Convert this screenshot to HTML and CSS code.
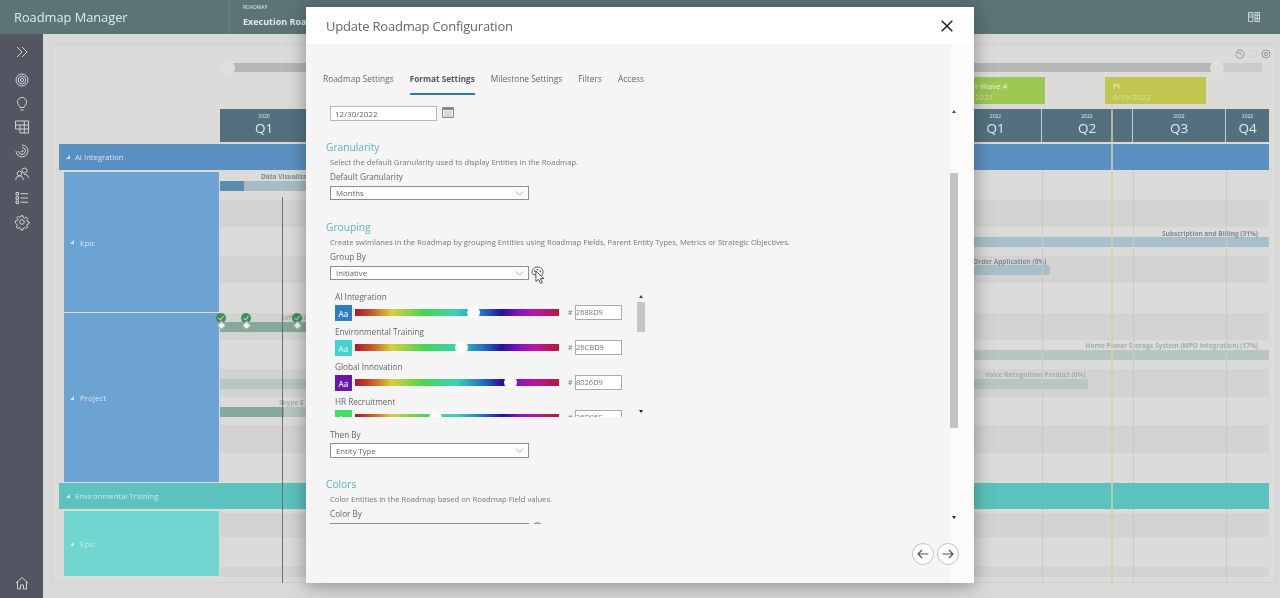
FILE: index.html
```html
<!DOCTYPE html>
<html lang="en">
<head>
<meta charset="utf-8">
<title>Roadmap Manager</title>
<link rel="stylesheet" href="styles.css">
</head>
<body>
<div class="app">
  <header class="topbar">
    <div class="brand">Roadmap Manager</div>
    <div class="crumb">
      <div class="crumb-small">ROADMAP</div>
      <div class="crumb-name">Execution Roadmap</div>
    </div>
    <svg class="top-icon" viewBox="0 0 12 10" width="12" height="10"><path d="M.5.500h4.500v9H.5zM.5 5H5M.5 2.800H5M7 .5h4.500v9H7zM7 3.200h4.500M7 6.500h4.500M9.200.5v9" fill="none" stroke="#e6ecec" stroke-width=".8"/></svg>
  </header>
  <div class="workspace">
    <nav class="sidebar">
      <svg class="nav-icon" viewBox="0 0 14 14"><path d="M2 2l5 5-5 5M7 2l5 5-5 5"/></svg>
      <svg class="nav-icon nav-gap" viewBox="0 0 14 14"><circle cx="7" cy="7" r="6"/><circle cx="7" cy="7" r="3.800"/><circle cx="7" cy="7" r="1.600"/></svg>
      <svg class="nav-icon" viewBox="0 -1 14 14"><path d="M5 10.500C4.600 8.500 2.500 7.500 2.500 5a4.500 4.500 0 0 1 9 0c0 2.500-2.100 3.500-2.500 5.500zM5.300 13h3.400"/></svg>
      <svg class="nav-icon" viewBox="0 0 14 14"><path d="M.5 1h13v12H5V5H.5zM.5 5v4H5M5 5h8.500M5 9h8.500M9.300 1v12"/></svg>
      <svg class="nav-icon" viewBox="0 0 14 14"><path d="M7 1a6 6 0 1 1-6 6M7 3.500A3.500 3.500 0 1 1 3.500 7M7 6a1 1 0 1 1-1 1"/></svg>
      <svg class="nav-icon" viewBox="0 0 14 14"><circle cx="9.500" cy="3.500" r="2.500"/><circle cx="4.500" cy="6.500" r="2.300"/><path d="M.8 13c0-2.600 1.600-4 3.700-4s3.700 1.400 3.700 4M9 7.500c2.500-.5 4.500 1 4.500 3.500"/></svg>
      <svg class="nav-icon" viewBox="0 0 14 14"><path d="M1 1.500h2.500V4H1zM1 5.800h2.500v2.500H1zM1 10h2.500v2.500H1zM5.500 2.700H13M5.500 7H13M5.500 11.200H13"/></svg>
      <svg class="nav-icon" viewBox="0 0 14 14"><circle cx="7" cy="7" r="2.300"/><path d="M6 .7h2l.4 1.800 1.300.6 1.600-1 1.400 1.400-1 1.600.6 1.300 1.800.4v2l-1.800.4-.6 1.300 1 1.600-1.400 1.400-1.600-1-1.300.6-.4 1.800H6l-.4-1.800-1.300-.6-1.600 1-1.400-1.400 1-1.600-.6-1.300L.4 8V6l1.800-.4.600-1.300-1-1.600 1.400-1.400 1.600 1 1.300-.6z"/></svg>
      <svg class="nav-icon nav-home" viewBox="0 0 14 14"><path d="M1 7l6-5.500L13 7M2.500 6v7H5.500V9h3v4h3V6"/></svg>
    </nav>
    <main class="stage">
      <section class="panel">
        <div class="panel-tools">
          <svg viewBox="0 0 12 12" width="10" height="10"><path d="M2 3a5 5 0 1 1-1 4M2 3l.3 2.500L4.500 4.700M6 3.500V6l2 1.500"/></svg>
          <svg viewBox="0 0 12 12" width="10" height="10" class="tool-faint"><path d="M2 2h8v8H2z"/></svg>
          <svg viewBox="0 0 12 12" width="10" height="10"><circle cx="6" cy="6" r="4.800"/><circle cx="6" cy="6" r="2"/></svg>
        </div>
        <div class="range">
          <div class="range-fill"></div>
          <span class="range-thumb range-thumb-a"></span>
          <span class="range-thumb range-thumb-b"></span>
        </div>
        <div class="releases">
          <div class="release release-green" style="left:915px;width:71px"><span>r Wave 4</span><span class="release-date">2021</span></div>
          <div class="release release-yellow" style="left:1046px;width:101px"><span>PI</span><span class="release-date">6/19/2022</span></div>
        </div>
        <div class="board">
          <div class="quarters">
            <div class="quarter" style="width:88px"><small>2020</small><b>Q1</b></div>
            <div class="quarter" style="width:642px"></div>
            <div class="quarter quarter-div" style="width:92px"><small>2022</small><b>Q1</b></div>
            <div class="quarter quarter-div" style="width:91px"><small>2022</small><b>Q2</b></div>
            <div class="quarter quarter-div" style="width:93px"><small>2022</small><b>Q3</b></div>
            <div class="quarter" style="width:43px"><small>2022</small><b>Q4</b></div>
          </div>

          <div class="band band-blue"><span class="tri"></span>AI Integration</div>
          <div class="swim swim-ai">
            <div class="types">
              <div class="type type-blue type-epic"><span class="tri"></span>Epic</div>
              <div class="type type-blue type-project"><span class="tri"></span>Project</div>
            </div>
            <div class="lanes">
              <i class="stripe" style="top:28px;height:27px"></i>
              <i class="stripe" style="top:84px;height:27px"></i>
              <i class="stripe" style="top:141px;height:27px"></i>
              <i class="stripe" style="top:197px;height:28px"></i>
              <i class="stripe" style="top:253px;height:28px"></i>
              <div class="bar bar-blue" style="left:0;top:9px;width:90px"><em style="width:24px"></em></div>
              <span class="bar-label" style="left:41px;top:0">Data Visualization</span>
              <div class="bar bar-pale" style="left:754px;top:65px;width:295px"></div>
              <span class="bar-label bar-label-end" style="right:11px;top:57px">Subscription and Billing (31%)</span>
              <div class="bar bar-pale bar-round" style="left:754px;top:93px;width:76px"></div>
              <span class="bar-label" style="left:753px;top:85px">Order Application (0%)</span>
              <div class="bar bar-sage" style="left:0;top:150px;width:90px"></div>
              <span class="bar-label bar-label-faint" style="left:61px;top:141px">Software</span>
              <div class="bar bar-mist" style="left:754px;top:178px;width:295px"></div>
              <span class="bar-label bar-label-faint bar-label-end" style="right:11px;top:169px">Home Power Storage System (MPO Integration) (17%)</span>
              <div class="bar bar-mist" style="left:0;top:207px;width:90px"></div>
              <div class="bar bar-mist" style="left:754px;top:207px;width:114px"></div>
              <span class="bar-label bar-label-faint" style="left:765px;top:198px">Voice Recognition Product (0%)</span>
              <div class="bar bar-mist" style="left:0;top:235px;width:90px"><em class="em-sage" style="width:64px"></em></div>
              <span class="bar-label bar-label-faint" style="left:59px;top:226px">Skype E</span>
              <div class="pin" style="left:-4px;top:141px"><svg viewBox="0 0 10 10" width="10" height="10"><circle cx="5" cy="5" r="5" fill="#3f8f5c"/><path d="M2.500 5l2 2 3-4" fill="none" stroke="#dfeee4" stroke-width="1"/></svg><u></u></div>
              <div class="pin" style="left:21px;top:141px"><svg viewBox="0 0 10 10" width="10" height="10"><circle cx="5" cy="5" r="5" fill="#3f8f5c"/><path d="M2.500 5l2 2 3-4" fill="none" stroke="#dfeee4" stroke-width="1"/></svg><u></u></div>
              <div class="pin" style="left:72px;top:141px"><svg viewBox="0 0 10 10" width="10" height="10"><circle cx="5" cy="5" r="5" fill="#3f8f5c"/><path d="M2.500 5l2 2 3-4" fill="none" stroke="#dfeee4" stroke-width="1"/></svg><u></u></div>
            </div>
          </div>

          <div class="band band-teal"><span class="tri"></span>Environmental Training</div>
          <div class="swim swim-env">
            <div class="types">
              <div class="type type-teal type-env"><span class="tri"></span>Epic</div>
            </div>
            <div class="lanes">
              <i class="stripe" style="top:2px;height:24px"></i>
              <i class="stripe" style="top:56px;height:10px"></i>
            </div>
          </div>

          <i class="vline vline-dark" style="left:223px"></i>
          <i class="vline" style="left:983px"></i>
          <i class="vline" style="left:1074px"></i>
          <i class="vline" style="left:1167px"></i>
          <i class="vline vline-today" style="left:1052px"></i>
        </div>
      </section>
    </main>
  </div>
</div>

<div class="modal">
  <div class="modal-head">
    <h1 class="modal-title">Update Roadmap Configuration</h1>
    <svg class="modal-close" viewBox="0 0 12 12" width="12" height="12"><path d="M.7.700l10.600 10.600M11.300.700L.7 11.300" stroke="#222" stroke-width="1.500" fill="none"/></svg>
  </div>
  <div class="modal-body">
    <div class="tabs">
      <span class="tab">Roadmap Settings</span>
      <span class="tab tab-active">Format Settings</span>
      <span class="tab">Milestone Settings</span>
      <span class="tab">Filters</span>
      <span class="tab">Access</span>
    </div>
    <div class="scroller">
      <div class="form">
        <div class="date-row">
          <div class="field field-date">12/30/2022</div>
          <svg class="cal" viewBox="0 0 12 11" width="12" height="11"><path d="M.5.500h11v10H.5z" fill="#f6f6f6" stroke="#888"/><path d="M.5 1h11v2H.5z" fill="#888"/><path d="M2 5h8M2 7h8M2 9h8" stroke="#bbb"/></svg>
        </div>

        <h2 class="section">Granularity</h2>
        <p class="desc">Select the default Granularity used to display Entities in the Roadmap.</p>
        <div class="label">Default Granularity</div>
        <div class="select">Months<svg viewBox="0 0 10 6" width="9" height="5"><path d="M.5.500L5 5 9.500.500" fill="none" stroke="#999"/></svg></div>

        <h2 class="section section-gap">Grouping</h2>
        <p class="desc">Create swimlanes in the Roadmap by grouping Entities using Roadmap Fields, Parent Entity Types, Metrics or Strategic Objectives.</p>
        <div class="label">Group By</div>
        <div class="select-row">
          <div class="select">Initiative<svg viewBox="0 0 10 6" width="9" height="5"><path d="M.5.500L5 5 9.500.500" fill="none" stroke="#999"/></svg></div>
          <svg class="palette" viewBox="0 0 14 14" width="13" height="13"><path d="M7 1C3.500 1 1 3.500 1 6.500 1 8.500 2.500 9.500 4.500 9.500h1.500c1 0 1 1 1 2 0 1 .5 1.500 1.500 1 3-1 4.500-3.500 4.500-6.500C13 3.500 10.500 1 7 1z" fill="#f6f6f6" stroke="#555"/><circle cx="4" cy="5.500" r=".9" fill="#555"/><circle cx="7" cy="3.800" r=".9" fill="#555"/><circle cx="10" cy="5.500" r=".9" fill="#555"/></svg>
          <svg class="cursor" viewBox="0 0 11 16" width="10" height="15"><path d="M1 1v11.500l3-2.500 2 4.500 2-1-2-4.300h3.800z" fill="#fff" stroke="#333" stroke-width=".9"/></svg>
        </div>

        <div class="swatches">
          <div class="swatch-rows">
            <div class="swatch-row">
              <div class="swatch-name">AI Integration</div>
              <div class="swatch-ctl">
                <span class="chip" style="background:#2e7fc1">Aa</span>
                <div class="hue"><span class="hue-thumb" style="left:58%"></span></div>
                <span class="hash">#</span><span class="hex">2688D9</span>
              </div>
            </div>
            <div class="swatch-row">
              <div class="swatch-name">Environmental Training</div>
              <div class="swatch-ctl">
                <span class="chip" style="background:#3fd3d3">Aa</span>
                <div class="hue"><span class="hue-thumb" style="left:52%"></span></div>
                <span class="hash">#</span><span class="hex">26CBD9</span>
              </div>
            </div>
            <div class="swatch-row">
              <div class="swatch-name">Global Innovation</div>
              <div class="swatch-ctl">
                <span class="chip" style="background:#6a18ab">Aa</span>
                <div class="hue"><span class="hue-thumb" style="left:76%"></span></div>
                <span class="hash">#</span><span class="hex">8026D9</span>
              </div>
            </div>
            <div class="swatch-row">
              <div class="swatch-name">HR Recruitment</div>
              <div class="swatch-ctl">
                <span class="chip" style="background:#3de066">Aa</span>
                <div class="hue"><span class="hue-thumb" style="left:39%"></span></div>
                <span class="hash">#</span><span class="hex">26D95F</span>
              </div>
            </div>
          </div>
          <div class="mini-scroll">
            <span class="arrow-up"></span>
            <span class="mini-thumb"></span>
            <span class="arrow-down arrow-end"></span>
          </div>
        </div>

        <div class="label label-then">Then By</div>
        <div class="select select-then">Entity Type<svg viewBox="0 0 10 6" width="9" height="5"><path d="M.5.500L5 5 9.500.500" fill="none" stroke="#999"/></svg></div>

        <h2 class="section section-tight">Colors</h2>
        <p class="desc">Color Entities in the Roadmap based on Roadmap Field values.</p>
        <div class="label">Color By</div>
        <div class="select-row">
          <div class="select"></div>
          <svg class="palette palette-clipped" viewBox="0 0 14 14" width="13" height="13"><path d="M7 1C3.500 1 1 3.500 1 6.500 1 8.500 2.500 9.500 4.500 9.500h1.500c1 0 1 1 1 2 0 1 .5 1.500 1.500 1 3-1 4.500-3.500 4.500-6.500C13 3.500 10.500 1 7 1z" fill="#f6f6f6" stroke="#555"/></svg>
        </div>
      </div>
      <div class="main-scroll">
        <span class="arrow-up"></span>
        <span class="main-thumb"></span>
        <span class="arrow-down arrow-end"></span>
      </div>
    </div>
    <div class="modal-foot">
      <span class="round"><svg viewBox="0 0 12 10" width="12" height="10"><path d="M11.500 5H1M5 1L1 5l4 4" fill="none" stroke="#555" stroke-width="1.200"/></svg></span>
      <span class="round"><svg viewBox="0 0 12 10" width="12" height="10"><path d="M.5 5H11M7 1l4 4-4 4" fill="none" stroke="#555" stroke-width="1.200"/></svg></span>
    </div>
  </div>
</div>
</body>
</html>
```
FILE: styles.css
```css
* { box-sizing: border-box; }
html, body { margin: 0; padding: 0; height: 100%; }
body {
  position: relative;
  overflow: hidden;
  width: 1280px;
  height: 598px;
  font-family: "Open Sans", "Noto Sans", sans-serif;
  background: #d9d9d8;
  color: #555;
}
.app { display: flex; flex-direction: column; height: 598px; filter: blur(.6px); }

/* top bar */
.topbar { height: 34px; flex: none; display: flex; align-items: center; background: #5b7476; color: #e3eaea; }
.brand { width: 230px; padding-left: 14px; font-size: 12.800px; border-right: 1px solid #6a8284; height: 34px; line-height: 34px; }
.crumb { padding-left: 13px; flex: 1; }
.crumb-small { font-size: 5px; line-height: 7px; margin-top: -3px; }
.crumb-name { font-size: 9px; font-weight: 700; line-height: 12px; margin-top: 5px; white-space: nowrap; }
.top-icon { margin-right: 20px; }

.workspace { flex: 1; display: flex; min-height: 0; }
.sidebar { width: 43px; flex: none; background: #535562; display: flex; flex-direction: column; align-items: center; padding: 11px 0 8px; }
.nav-icon { width: 14px; height: 14px; margin-bottom: 9.700px; fill: none; stroke: #dfe1e3; stroke-width: .9; flex: none; overflow: visible; }
.nav-gap { margin-top: 4px; }
.nav-home { margin-top: auto; margin-bottom: 0; }

/* roadmap */
.stage { flex: 1; padding: 10px 3px 15px 8px; min-width: 0; }
.panel { position: relative; height: 100%; background: #dbdbda; border: 1px solid #d0d2cf; padding: 18px 0 0 7px; }
.panel-tools { position: absolute; right: 5px; top: 4px; display: flex; gap: 3px; }
.panel-tools svg { fill: none; stroke: #888; stroke-width: 1; }
.panel-tools .tool-faint { stroke: #d0d0d0; }
.range { position: relative; height: 9px; margin: 0 14px 0 169px; background: #cbcbcb; }
.range-fill { height: 100%; width: 989px; background: #b6b6b6; }
.range-thumb { position: absolute; top: -2px; width: 14px; height: 14px; border-radius: 50%; background: #dedede; }
.range-thumb-a { left: -7px; }
.range-thumb-b { left: 982px; }
.releases { position: relative; height: 27px; margin-top: 5px; }
.release { position: absolute; top: 0; height: 27px; padding: 3px 0 0 1px; color: #f1f5dc; font-size: 8px; line-height: 11px; display: flex; flex-direction: column; }
.release-date { color: #d8e09a; }
.release-green { background: #9dc852; }
.release-yellow { background: #c0c650; padding-left: 8px; }

.board { position: relative; margin-top: 5px; width: 1210px; height: 474px; }
.quarters { height: 33px; margin-left: 161px; display: flex; }
.quarter { background: #54707f; color: #e6ebee; text-align: center; height: 33px; display: flex; flex-direction: column; align-items: center; padding-top: 4px; }
.quarter-div { border-right: 1px solid #c3ccd1; }
.quarter small { font-size: 5px; line-height: 7px; }
.quarter b { font-weight: 400; font-size: 13.500px; line-height: 16px; }

.band { position: relative; z-index: 1; height: 26px; margin-top: 2px; display: flex; align-items: center; color: #d6e4ef; font-size: 7.700px; padding-left: 7px; gap: 5px; }
.band-blue { background: #5a90c1; }
.band-teal { background: #5bc2bd; margin-top: 1px; }
.tri { width: 0; height: 0; border-style: solid; border-width: 0 0 4px 4px; border-color: transparent transparent #dbe8f2 transparent; flex: none; }

.swim { display: flex; margin-top: 2px; }
.swim-ai { height: 310px; }
.swim-env { height: 65px; margin-top: 2px; }
.types { width: 155px; margin-left: 5px; flex: none; display: flex; flex-direction: column; gap: 1px; }
.type { display: flex; align-items: center; gap: 6px; padding-left: 6px; font-size: 8px; color: #d6e4ef; }
.type-blue { background: #6da3d3; }
.type-teal { background: #72d6d0; color: #c3eeeb; }
.type-epic { height: 140px; }
.type-project { height: 169px; }
.type-env { height: 65px; }
.lanes { position: relative; flex: 1; margin-left: 1px; }
.stripe { position: absolute; left: 0; right: 0; background: #d3d3d2; }
.bar { position: absolute; height: 10px; overflow: hidden; display: flex; }
.bar em { display: block; height: 100%; }
.bar-blue { background: #a9bcc6; }
.bar-blue em { background: #5a8cb0; }
.bar-pale { background: #a7bfc9; }
.bar-round { border-radius: 2px; }
.bar-sage { background: #86a89b; }
.bar-mist { background: #b6c6c1; }
.em-sage { background: #86a89b; }
.bar-label { position: absolute; font-size: 6.500px; line-height: 9px; font-weight: 700; color: #7c8b92; white-space: nowrap; }
.bar-label-end { text-align: right; }
.bar-label-faint { color: #a2aeab; }
.pin { position: absolute; width: 10px; display: flex; flex-direction: column; align-items: center; }
.pin svg { display: block; }
.pin u { display: block; width: 7px; height: 7px; margin-top: -1px; background: #f2f2f2; border: 1px solid #8a9a94; transform: rotate(45deg); }
.vline { position: absolute; top: 33px; bottom: 0; width: 1px; background: #c8cac7; }
.vline-dark { top: 88px; background: #6d6f70; z-index: 2; }
.vline-today { top: -4px; width: 2px; background: #d0d1a9; opacity: .75; z-index: 2; }

/* modal */
.modal {
  position: absolute;
  left: 306px;
  top: 7px;
  width: 668px;
  height: 576px;
  display: flex;
  flex-direction: column;
  box-shadow: 0 2px 18px rgba(40, 40, 40, .45);
  background: #f6f6f6;
  filter: blur(.45px);
}
.modal-head { height: 37px; flex: none; background: #fff; display: flex; align-items: center; justify-content: space-between; padding: 0 21px 0 20px; }
.modal-title { margin: 0; font-weight: 400; font-size: 13px; letter-spacing: -.2px; color: #666; white-space: nowrap; }
.modal-body { flex: 1; display: flex; flex-direction: column; min-height: 0; background: linear-gradient(90deg, #f5f5f5 0, #f5f5f5 96.500%, #fbfbfb 96.500%); }
.tabs { display: flex; gap: 16px; padding: 28px 0 0 17px; height: 51px; flex: none; }
.tab { font-size: 8.400px; line-height: 14px; height: 23px; color: #666; white-space: nowrap; }
.tab-active { font-weight: 700; font-size: 8.200px; color: #555; border-bottom: 2px solid #2b7da3; }
.scroller { display: flex; height: 419px; margin-top: 10px; flex: none; }
.form { width: 644px; padding-left: 20px; overflow: hidden; flex: none; }
.date-row { display: flex; align-items: flex-start; gap: 5px; margin: 1px 0 0 4px; }
.field { background: #fff; border: 1px solid #b6b6b6; font-size: 8px; line-height: 13px; padding-left: 4px; color: #666; }
.field-date { width: 107px; height: 15px; }
.cal { margin-top: 1px; }
.section { margin: 19px 0 0; font-weight: 400; font-size: 10.200px; line-height: 14px; color: #5cb2c2; }
.section-gap { margin-top: 20px; }
.section-tight { margin-top: 19px; }
.desc { margin: 3px 0 0 4px; font-size: 7.650px; line-height: 11px; color: #777; white-space: nowrap; }
.label { margin: 3px 0 0 4px; font-size: 8.200px; line-height: 12px; color: #666; }
.select { position: relative; width: 199px; height: 14px; margin: 3px 0 0 4px; background: #fff; border: 1px solid #8d8d8d; font-size: 7.800px; line-height: 12px; padding-left: 5px; color: #666; display: flex; justify-content: space-between; align-items: center; padding-right: 4px; flex: none; }
.select-row { position: relative; display: flex; align-items: flex-start; }
.palette { margin: 3px 0 0 2px; }
.palette-clipped { margin-top: 2px; }
.cursor { position: absolute; left: 209px; top: 7px; }
.swatches { display: flex; height: 126px; margin: 11px 0 0 9px; width: 311px; overflow: hidden; }
.swatch-rows { flex: 1; }
.swatch-row { height: 35px; }
.swatch-name { font-size: 8.200px; line-height: 12px; color: #666; margin-bottom: 2px; }
.swatch-ctl { display: flex; align-items: center; height: 16px; }
.chip { width: 17px; height: 16px; flex: none; color: #e8f0f8; font-size: 8px; font-weight: 600; text-align: center; line-height: 17px; }
.hue { position: relative; width: 204px; height: 7px; margin: -1px 0 0 3px; flex: none; background: linear-gradient(90deg, #b3142f 0, #c7552a 8%, #d6d03c 18%, #44d650 34%, #3cd2bb 50%, #2264bf 64%, #241299 72%, #8512c2 80%, #bc169f 88%, #bc163c 100%); }
.hue-thumb { position: absolute; top: -2.500px; width: 11px; height: 11px; margin-left: -5px; border-radius: 50%; background: #fff; box-shadow: 0 0 0 1px #f6f6f6; }
.hash { margin: -2px 0 0 9px; width: 7px; font-size: 7px; color: #777; }
.hex { width: 47px; height: 15px; margin-top: -2px; background: #fff; border: 1px solid #aaa; font-size: 7.500px; line-height: 13px; color: #777; flex: none; }
.mini-scroll { width: 10px; flex: none; display: flex; flex-direction: column; align-items: center; padding-top: 4px; }
.mini-thumb { width: 8px; height: 30px; margin-top: 4px; background: #c5c5c5; }
.arrow-up, .arrow-down { width: 0; height: 0; border-left: 2.500px solid transparent; border-right: 2.500px solid transparent; flex: none; }
.arrow-up { border-bottom: 3px solid #444; }
.arrow-down { border-top: 3px solid #222; }
.arrow-end { margin-top: auto; margin-bottom: 4px; }
.main-scroll .arrow-end { margin-bottom: 5px; }
.label-then { margin-top: 12px; }
.select-then { height: 15px; margin-top: 2px; }
.main-scroll { width: 8px; margin-left: 0; flex: none; display: flex; flex-direction: column; align-items: center; padding-top: 5px; }
.main-thumb { width: 8px; height: 255px; margin-top: 60px; background: #c3c3c3; }
.modal-foot { flex: 1; display: flex; justify-content: flex-end; align-items: flex-start; gap: 3px; padding: 19px 15px 0 0; }
.round { width: 22px; height: 22px; border-radius: 50%; background: #fff; border: 1px solid #c4c4c4; display: flex; align-items: center; justify-content: center; }
```
